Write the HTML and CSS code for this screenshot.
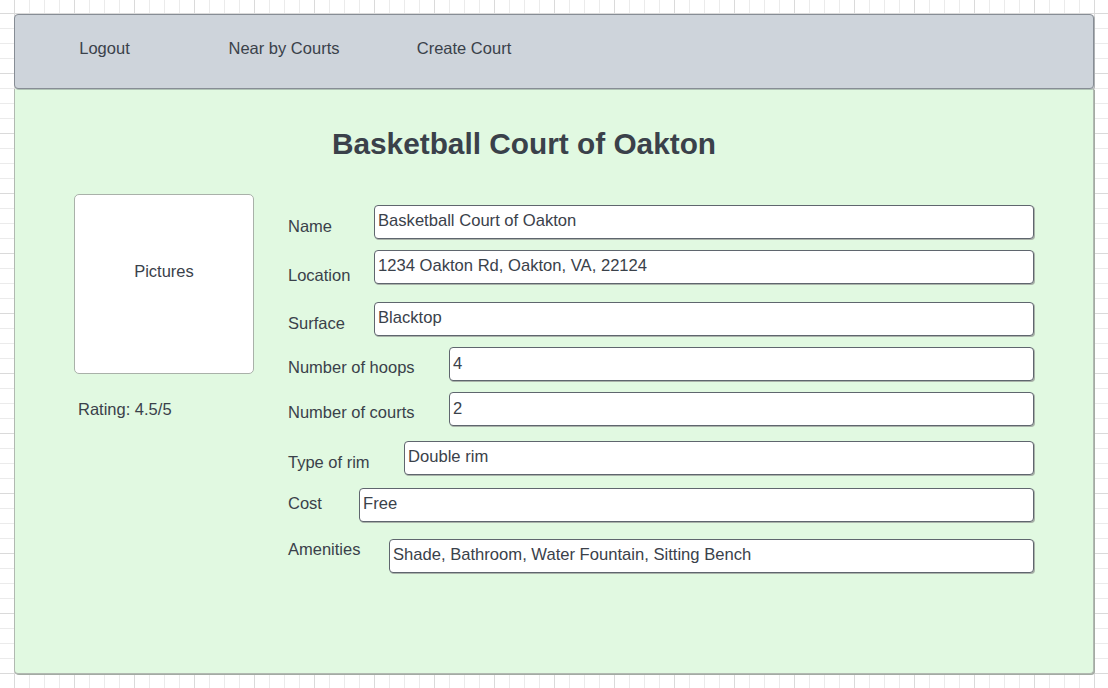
FILE: index.html
```html
<!DOCTYPE html>
<html lang="en">
<head>
<meta charset="utf-8">
<title>Basketball Court of Oakton</title>
<link rel="stylesheet" href="styles.css">
</head>
<body>
<div class="page">
  <nav class="nav">
    <a class="nav-item">Logout</a>
    <a class="nav-item">Near by Courts</a>
    <a class="nav-item">Create Court</a>
  </nav>
  <main class="panel">
    <h1 class="title">Basketball Court of Oakton</h1>
    <div class="columns">
      <aside class="side">
        <div class="pictures">Pictures</div>
        <div class="rating">Rating: 4.5/5</div>
      </aside>
      <section class="form">
        <div class="row row--name">
          <div class="label">Name</div>
          <div class="box">Basketball Court of Oakton</div>
        </div>
        <div class="row row--location">
          <div class="label">Location</div>
          <div class="box">1234 Oakton Rd, Oakton, VA, 22124</div>
        </div>
        <div class="row row--surface">
          <div class="label">Surface</div>
          <div class="box">Blacktop</div>
        </div>
        <div class="row row--hoops">
          <div class="label">Number of hoops</div>
          <div class="box box--low">4</div>
        </div>
        <div class="row row--courts">
          <div class="label">Number of courts</div>
          <div class="box box--low">2</div>
        </div>
        <div class="row row--rim">
          <div class="label">Type of rim</div>
          <div class="box">Double rim</div>
        </div>
        <div class="row row--cost">
          <div class="label">Cost</div>
          <div class="box">Free</div>
        </div>
        <div class="row row--amenities">
          <div class="label">Amenities</div>
          <div class="box">Shade, Bathroom, Water Fountain, Sitting Bench</div>
        </div>
      </section>
    </div>
  </main>
</div>
</body>
</html>
```

FILE: styles.css
```css
html, body {
  margin: 0;
  padding: 0;
}

body {
  width: 1108px;
  height: 688px;
  overflow: hidden;
  font-family: "Liberation Sans", Arial, sans-serif;
  font-size: 16.5px;
  line-height: 20px;
  color: #3a414a;
  background-color: #ffffff;
  background-image:
    linear-gradient(to right, #dadada 1px, transparent 1px),
    linear-gradient(to bottom, #dadada 1px, transparent 1px),
    linear-gradient(to right, #ebebeb 1px, transparent 1px),
    linear-gradient(to bottom, #ebebeb 1px, transparent 1px);
  background-size: 60px 60px, 60px 60px, 15px 15px, 15px 15px;
  background-position: 14px 13px, 14px 13px, 14px 13px, 14px 13px;
}

.page {
  padding: 14px 0 0 14px;
  width: 1080px;
}

.nav {
  box-sizing: border-box;
  height: 75px;
  display: flex;
  background: #ced4db;
  border: 1px solid #878d95;
  border-radius: 4px;
  box-shadow: 1px 1px 0 rgba(90, 96, 104, 0.35);
  position: relative;
  z-index: 1;
}

.nav-item {
  width: 180px;
  padding-top: 23px;
  text-align: center;
  color: #3a414a;
  text-decoration: none;
}

.nav-item:first-child {
  width: 179px;
}

.panel {
  box-sizing: border-box;
  height: 585px;
  background: #e1f9e1;
  border: 1px solid #b1b9b1;
  border-top: none;
  border-radius: 0 0 4px 4px;
  box-shadow: 1px 1px 0 #a3aba3;
  padding: 37px 59px 0 59px;
}

.title {
  margin: 0 60px 0 0;
  font-size: 29.8px;
  line-height: 36px;
  font-weight: bold;
  text-align: center;
  color: #3a414a;
}

.columns {
  display: flex;
  gap: 34px;
  margin-top: 32px;
}

.side {
  width: 180px;
  flex: none;
}

.pictures {
  box-sizing: border-box;
  width: 180px;
  height: 180px;
  background: #ffffff;
  border: 1.5px solid #a9b1a9;
  border-radius: 5px;
  padding-top: 66px;
  text-align: center;
}

.rating {
  margin-top: 25px;
  padding-left: 4px;
}

.form {
  flex: 1;
  margin-top: 11px;
  display: flex;
  flex-direction: column;
}

.row {
  display: flex;
  align-items: flex-start;
}

.label {
  flex: none;
  width: 86px;
  margin-top: 11px;
}

.box {
  box-sizing: border-box;
  flex: 1;
  height: 34px;
  background: #ffffff;
  border: 1px solid #5f666e;
  border-radius: 4px;
  box-shadow: 1px 1px 0 #aab3aa;
  padding: 5px 3px 0 3px;
  font-size: 16.6px;
  white-space: nowrap;
}

.box--low {
  padding-top: 6px;
}

.row--location { margin-top: 11px; }
.row--location .label { margin-top: 15px; }

.row--surface { margin-top: 17px; }
.row--surface .label { margin-top: 10.5px; }

.row--hoops { margin-top: 11px; }
.row--hoops .label { width: 161px; margin-top: 10px; }

.row--courts { margin-top: 11px; }
.row--courts .label { width: 161px; margin-top: 10px; }

.row--rim { margin-top: 15px; }
.row--rim .label { width: 116px; margin-top: 10.5px; }

.row--cost { margin-top: 13px; }
.row--cost .label { width: 71px; margin-top: 4.5px; }

.row--amenities { margin-top: 17px; }
.row--amenities .label { width: 101px; margin-top: 0; }
```
